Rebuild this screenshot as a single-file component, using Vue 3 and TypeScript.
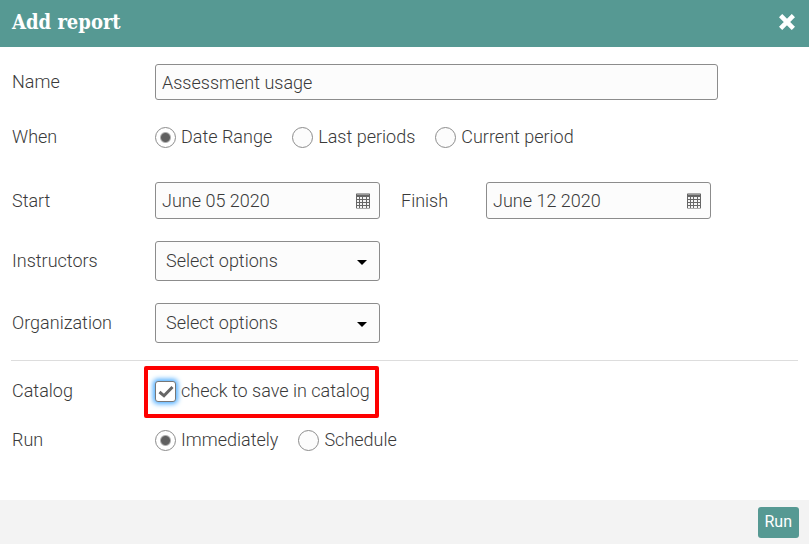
<script setup lang="ts">
import { reactive, ref } from 'vue'

type Choice = { value: string; label: string }

const periods: Choice[] = [
  { value: 'range', label: 'Date Range' },
  { value: 'last', label: 'Last periods' },
  { value: 'current', label: 'Current period' },
]
const runModes: Choice[] = [
  { value: 'now', label: 'Immediately' },
  { value: 'schedule', label: 'Schedule' },
]

const name = ref('Assessment usage')
const period = ref('range')
const dates = reactive([
  { id: 'start', label: 'Start', value: 'June 05 2020' },
  { id: 'finish', label: 'Finish', value: 'June 12 2020' },
])
const pickers = reactive([
  { id: 'instructors', label: 'Instructors', value: '' },
  { id: 'organization', label: 'Organization', value: '' },
])
const saveToCatalog = ref(true)
const runMode = ref('now')
</script>

<template>
  <form class="dialog" @submit.prevent>
    <header class="header">
      <h1 class="title">Add report</h1>
      <button class="close" type="button" aria-label="Close">
        <svg viewBox="0 0 16 16" width="16" height="16" aria-hidden="true">
          <path d="M3.2 3.2 L12.8 12.8 M12.8 3.2 L3.2 12.8" stroke="#fff" stroke-width="4.6" stroke-linecap="square" />
        </svg>
      </button>
    </header>

    <div class="body">
      <div class="row">
        <label class="caption" for="name">Name</label>
        <input id="name" v-model="name" class="field name" type="text" />
      </div>

      <div class="row choices when" role="radiogroup" aria-labelledby="when">
        <span id="when" class="caption">When</span>
        <label v-for="p in periods" :key="p.value" class="choice">
          <input v-model="period" class="radio" type="radio" name="period" :value="p.value" />
          {{ p.label }}
        </label>
      </div>

      <div class="row dates">
        <template v-for="d in dates" :key="d.id">
          <label class="caption" :class="d.id" :for="d.id">{{ d.label }}</label>
          <div class="date">
            <input :id="d.id" v-model="d.value" class="field" type="text" />
            <svg class="calendar" viewBox="0 0 14 16" width="14" height="16" aria-hidden="true">
              <rect width="14" height="16" rx="1" fill="#aaa" />
              <rect y="1" width="14" height="14" fill="#666" />
              <g fill="#f4f4f4">
                <template v-for="y in [4, 7, 10, 13]" :key="y">
                  <rect x="1" :y="y" width="2" height="2" />
                  <rect x="4" :y="y" width="2" height="2" />
                  <rect x="7" :y="y" width="3" height="2" />
                  <rect x="11" :y="y" width="2" height="2" />
                </template>
              </g>
              <rect x="1" y="1" width="12" height="1" fill="#999" />
            </svg>
          </div>
        </template>
      </div>

      <div v-for="s in pickers" :key="s.id" class="row picker">
        <label class="caption" :for="s.id">{{ s.label }}</label>
        <div class="select">
          <select :id="s.id" v-model="s.value" class="field">
            <option value="">Select options</option>
          </select>
          <svg class="arrow" viewBox="0 0 10 5" width="10" height="5" aria-hidden="true"><path d="M0 0h10L5 5z" /></svg>
        </div>
      </div>

      <hr class="divider" />

      <div class="row choices catalog">
        <span class="caption">Catalog</span>
        <label class="choice highlighted">
          <span class="check">
            <input v-model="saveToCatalog" class="checkbox" type="checkbox" />
            <svg v-if="saveToCatalog" class="tick" viewBox="0 0 16 14" width="16" height="14" aria-hidden="true">
              <path d="M1.5 7 L6 10.8 L14.5 2" fill="none" stroke="#666" stroke-width="3" />
            </svg>
          </span>
          check to save in catalog
        </label>
      </div>

      <div class="row choices run" role="radiogroup" aria-labelledby="run">
        <span id="run" class="caption">Run</span>
        <label v-for="m in runModes" :key="m.value" class="choice">
          <input v-model="runMode" class="radio" type="radio" name="run" :value="m.value" />
          {{ m.label }}
        </label>
      </div>
    </div>

    <footer class="footer">
      <button class="submit" type="submit">Run</button>
    </footer>
  </form>
</template>

<style>
body {
  margin: 0;
  background: #fff;
}
</style>

<style scoped>
* {
  box-sizing: border-box;
}

.dialog {
  display: flex;
  flex-direction: column;
  min-height: 100vh;
  font: 300 18px/22px Roboto, "Liberation Sans", sans-serif;
  color: #3a3a3a;
}

.header {
  display: flex;
  align-items: center;
  justify-content: space-between;
  height: 47px;
  padding: 0 14px 4px 12px;
  background: #569993;
}

.title {
  margin: 0;
  font: 700 20px/26px "Roboto Slab", "DejaVu Serif Condensed", "DejaVu Serif", serif;
  color: #fff;
}

.close {
  display: flex;
  padding: 0;
  border: 0;
  background: none;
}

.close svg {
  border-radius: 3px;
}

.body {
  flex: 1;
  padding: 17px 11px 24px;
}

.row {
  display: flex;
  align-items: center;
}

.caption {
  flex: 0 0 144px;
  padding-left: 1px;
}

.field {
  width: 100%;
  height: 37px;
  padding: 0 6px;
  border: 1px solid #8c8c8c;
  border-radius: 3px;
  background: #fcfcfc;
  font: inherit;
  color: inherit;
  outline: 0;
}

.name {
  flex: 0 1 563px;
  height: 36px;
}

.when {
  margin-top: 26px;
}

.dates {
  margin-top: 34px;
}

.finish {
  flex-basis: 106px;
  padding-left: 21px;
}

.date,
.select {
  position: relative;
  flex: 0 1 225px;
}

.date .field {
  display: block;
}

.calendar {
  position: absolute;
  top: 11px;
  right: 10px;
}

.picker {
  margin-top: 22px;
}

.select .field {
  display: block;
  height: 40px;
  padding: 0 10px;
  appearance: none;
}

.arrow {
  position: absolute;
  top: 19px;
  right: 13px;
  fill: #000;
  pointer-events: none;
}

.divider {
  height: 1px;
  margin: 17px 0 0;
  border: 0;
  background: #ddd;
}

.choices {
  height: 22px;
}

.choice {
  display: flex;
  align-items: center;
  gap: 5px;
  margin-right: 20px;
}

.radio {
  appearance: none;
  width: 21px;
  height: 21px;
  margin: 0;
  border: 1px solid #8c8c8c;
  border-radius: 50%;
  background: #fcfcfc;
}

.radio:checked {
  background: radial-gradient(circle, #606060 4px, #fff 6px);
}

.catalog {
  margin-top: 19px;
}

.run {
  margin-top: 27px;
}

.check {
  display: flex;
  position: relative;
}

.checkbox {
  appearance: none;
  width: 21px;
  height: 21px;
  margin: 0;
  border: 1px solid #777;
  border-radius: 3px;
  background: #fff;
  box-shadow: 0 0 5px 2px #4dadff;
}

.tick {
  position: absolute;
  top: 4px;
  left: 3px;
  pointer-events: none;
}

.highlighted {
  position: relative;
}

.highlighted::after {
  content: "";
  position: absolute;
  inset: -14px -9px -16px -11px;
  border: 4px solid #fe0000;
  border-radius: 2px;
  pointer-events: none;
}

.footer {
  display: flex;
  align-items: center;
  justify-content: flex-end;
  height: 44px;
  padding: 0 10px;
  background: #f3f3f3;
}

.submit {
  height: 31px;
  padding: 0 7px 0 6px;
  border: 0;
  border-radius: 3px;
  background: #569993;
  font: 400 16px/20px Roboto, "Liberation Sans", sans-serif;
  color: #fff;
}
</style>
